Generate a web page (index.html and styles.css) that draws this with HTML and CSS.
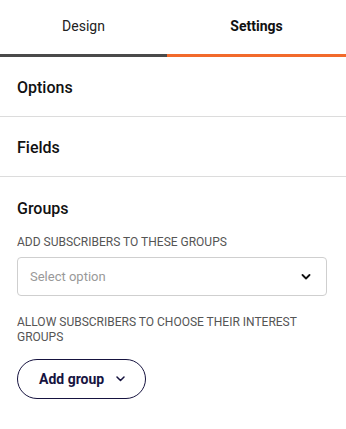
FILE: index.html
```html
<!DOCTYPE html>
<html lang="en">
  <head>
    <meta charset="UTF-8" />
    <meta name="viewport" content="width=device-width, initial-scale=1.0" />
    <title>Form Settings</title>
    <link rel="stylesheet" href="styles.css">
  </head>
  <body>
    <!-- Tabs -->
    <nav class="tabs">
      <a href="#" class="tab tab-design">Design</a>
      <a href="#" class="tab tab-settings active">Settings</a>
    </nav>

    <!-- Sections -->
    <section class="section">
      <h2 class="section-title">Options</h2>
    </section>
    <section class="section">
      <h2 class="section-title">Fields</h2>
    </section>

    <section class="section groups">
      <h2 class="section-title">Groups</h2>

      <label class="field-label">Add subscribers to these groups</label>
      <div class="select">
        <span class="select-placeholder">Select option</span>
        <svg class="chevron" width="10" height="6" viewBox="0 0 10 6">
          <path d="M1.5 1 L5 4.5 L8.5 1" fill="none" stroke="#111" stroke-width="1.8" stroke-linecap="round" stroke-linejoin="round" />
        </svg>
      </div>

      <label class="field-label">Allow subscribers to choose their interest groups</label>
      <button class="add-btn">
        Add group
        <svg class="btn-chevron" width="9" height="6" viewBox="0 0 9 6">
          <path d="M1 1 L4.5 4.5 L8 1" fill="none" stroke="#16133f" stroke-width="1.5" stroke-linecap="round" stroke-linejoin="round" />
        </svg>
      </button>
    </section>
  </body>
</html>
```

FILE: styles.css
```css
* {
  margin: 0;
  padding: 0;
  box-sizing: border-box;
  font-family: Roboto, "Liberation Sans", sans-serif;
}

body {
  background-color: #fff;
  color: #111;
  width: 346px;
}

/* Tabs */
.tabs {
  display: flex;
  height: 57px;
}

.tab {
  display: flex;
  align-items: center;
  justify-content: center;
  padding-bottom: 3px;
  text-decoration: none;
  color: #222;
  font-size: 14px;
  border-bottom: 3px solid #4a4a4a;
}

.tab-design {
  width: 167px;
}

.tab-settings {
  flex-grow: 1;
}

.tab.active {
  font-weight: 700;
  color: #111;
  border-bottom-color: #f26a2b;
}

/* Sections */
.section {
  padding: 2px 19px 0 17px;
  border-bottom: 1px solid #dcdcdc;
  height: 60px;
  display: flex;
  align-items: center;
}

.section-title {
  font-size: 16px;
  font-weight: 500;
  color: #111;
}

.groups {
  display: block;
  height: auto;
  border-bottom: none;
  padding-top: 22px;
}

.field-label {
  display: block;
  font-size: 12px;
  line-height: 15px;
  text-transform: uppercase;
  color: #555;
  margin-top: 17px;
}

.select {
  display: flex;
  align-items: center;
  justify-content: space-between;
  margin-top: 7px;
  height: 39px;
  padding: 0 15px 0 12px;
  border: 1px solid #cfcfcf;
  border-radius: 4px;
}

.select-placeholder {
  font-size: 13px;
  color: #999;
}

.select + .field-label {
  margin-top: 19px;
}

.add-btn {
  display: flex;
  align-items: center;
  gap: 12px;
  margin-top: 14px;
  height: 40px;
  padding: 0 20px 0 21px;
  background: #fff;
  border: 1px solid #16133f;
  border-radius: 20px;
  font-size: 14px;
  font-weight: 700;
  color: #16133f;
  cursor: pointer;
}
```
